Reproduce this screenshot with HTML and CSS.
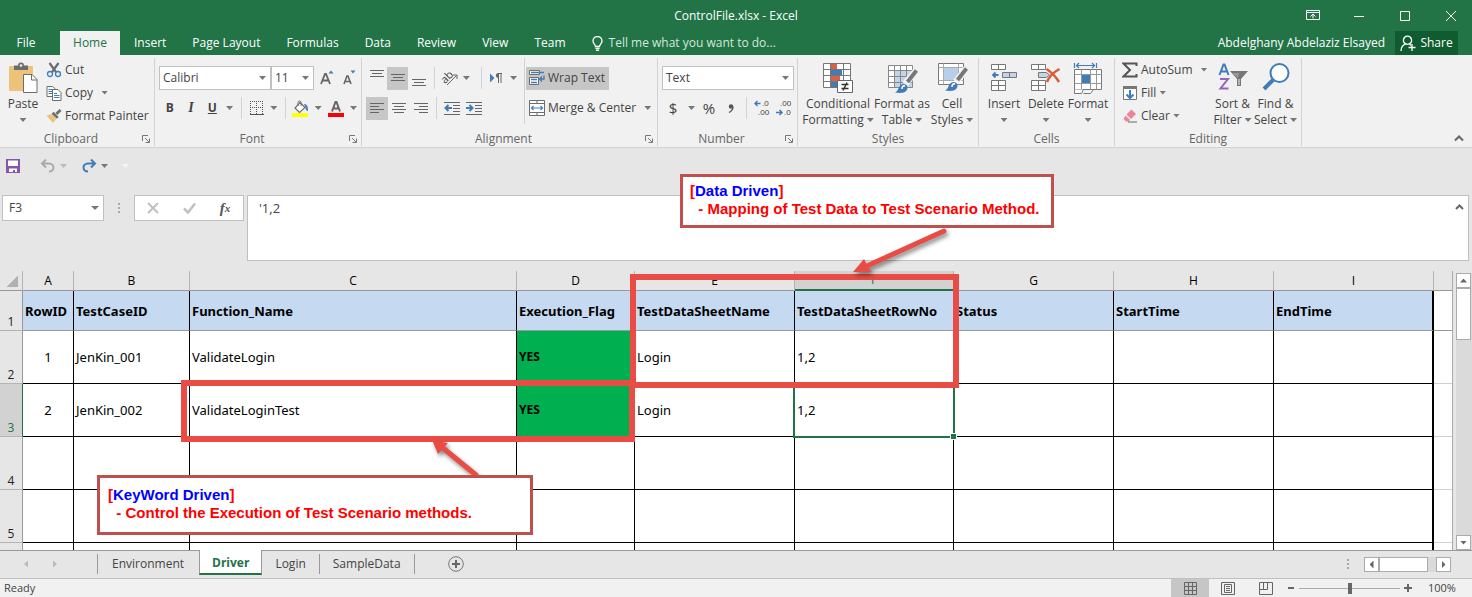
FILE: index.html
```
<!DOCTYPE html>
<html lang="en">
<head>
<meta charset="utf-8">
<title>ControlFile.xlsx - Excel</title>
<link rel="stylesheet" href="styles.css">
</head>
<body>
<div class="app">
  <header class="titlebar">
    <div class="caption">
      <h1 class="doc-title">ControlFile.xlsx - Excel</h1>
      <div class="window-controls">
        <button aria-label="Ribbon display options"><svg width="14" height="12" viewBox="0 0 14 12"><path d="M.5.5h13v9H.5zM.5 2.500h13M7 8.500V4M4.500 6.500 7 4l2.500 2.500" /></svg></button>
        <button aria-label="Minimize"><svg width="12" height="12" viewBox="0 0 12 12"><path d="M1 6.500h10"/></svg></button>
        <button aria-label="Maximize"><svg width="12" height="12" viewBox="0 0 12 12"><path d="M1.500 1.500h9v9h-9z"/></svg></button>
        <button aria-label="Close"><svg width="12" height="12" viewBox="0 0 12 12"><path d="M1 1l10 10M11 1 1 11"/></svg></button>
      </div>
    </div>
    <nav class="tabs">
      <button class="tab file">File</button>
      <button class="tab active">Home</button>
      <button class="tab">Insert</button>
      <button class="tab">Page Layout</button>
      <button class="tab">Formulas</button>
      <button class="tab">Data</button>
      <button class="tab">Review</button>
      <button class="tab">View</button>
      <button class="tab">Team</button>
      <button class="tab tell"><svg width="11" height="15" viewBox="0 0 11 15"><path d="M3.500 10.500C3.500 8.500 1 7.500 1 5a4.500 4.500 0 0 1 9 0c0 2.500-2.500 3.500-2.500 5.500zM3.500 12.500h4M4 14.500h3"/></svg>Tell me what you want to do...</button>
      <span class="account">Abdelghany Abdelaziz Elsayed</span>
      <button class="share"><svg width="16" height="17" viewBox="0 0 16 17"><path d="M7.500 1.200a4 4 0 0 1 1.800 7.600L11 10.500M7.500 1.200a4 4 0 0 0-1.800 7.600C2.500 10 1 12.500 1 16M5.700 8.800c1 .6 2.500.6 3.600 0M12 9v7M8.500 12.500h7"/></svg>Share</button>
    </nav>
  </header>

  <section class="ribbon">
    <div class="group clipboard">
      <div class="body">
        <button class="big paste"><svg width="30" height="32" viewBox="0 0 30 32"><rect x="1" y="4" width="24" height="25" rx="1" fill="#edc27a"/><path d="M6 8V3.500h4a3 3 0 0 1 6 0h4V8z" fill="#6d6d6d"/><circle cx="13" cy="3.500" r="1.300" fill="#f1f1f1"/><path d="M15.500 12.500h8.500l5 5v13H15.500z" fill="#fff" stroke="#6d6d6d"/><path d="M23.500 12.500V18H29" fill="none" stroke="#6d6d6d"/></svg>Paste<i class="caret"></i></button>
        <div class="stack">
          <button class="row"><svg width="16" height="16" viewBox="0 0 16 16"><path d="M3.500 1 10 10M12.500 1 6 10" stroke="#6d6d6d" stroke-width="2.200"/><circle cx="4" cy="12" r="2.500" fill="none" stroke="#3f7cb8" stroke-width="1.300"/><circle cx="12" cy="12" r="2.500" fill="none" stroke="#3f7cb8" stroke-width="1.300"/></svg>Cut</button>
          <button class="row"><svg width="16" height="16" viewBox="0 0 16 16"><path d="M1 1.500h5.500L9.500 4v7.500H1z" fill="#fff" stroke="#6d6d6d"/><path d="M2.500 4.500h4M2.500 6.500h4M2.500 8.500h4" stroke="#3f7cb8"/><path d="M6.500 4.500h5.500l3 3v8H6.500z" fill="#fff" stroke="#6d6d6d"/><path d="M8 8.500h3M8 10.500h5.500M8 12.500h5.500" stroke="#3f7cb8"/></svg>Copy<i class="caret far"></i></button>
          <button class="row"><svg width="16" height="16" viewBox="0 0 17 16"><path d="M.5 7.500 6 6l5 5-3.500 4.500z" fill="#edc27a"/><path d="M6 5.500 8 3.500l5.500 5.500-2 2z" fill="#6d6d6d"/><path d="m11 6 4.500-4.500" stroke="#6d6d6d" stroke-width="3"/></svg>Format Painter</button>
        </div>
      </div>
      <div class="label"><span>Clipboard</span><svg class="launch" width="8" height="8" viewBox="0 0 8 8"><path d="M.5 6V.5H6M3 3l4 4M7.500 3.500v4h-4"/></svg></div>
    </div>

    <div class="group font">
      <div class="body lines">
        <div class="line">
          <label class="combo name"><select aria-label="Font"><option>Calibri</option></select></label>
          <label class="combo size"><select aria-label="Font size"><option>11</option></select></label>
          <button class="ib grow" aria-label="Increase font size"><svg width="16" height="16" viewBox="0 0 16 16"><path d="M1 14 5 4h1l4 10M2.500 10.500h6" fill="none" stroke="#666" stroke-width="1.800"/><path d="m8.500 3.500 2.500-3 2.500 3z" fill="#3f7cb8"/></svg></button>
          <button class="ib" aria-label="Decrease font size"><svg width="16" height="16" viewBox="0 0 16 16"><path d="M2 14 5 6h1l3 8M3 11.500h5" fill="none" stroke="#666" stroke-width="1.600"/><path d="m8.500.5 2.500 3 2.500-3z" fill="#3f7cb8"/></svg></button>
        </div>
        <div class="line">
          <button class="ib b">B</button><button class="ib i">I</button><button class="ib u">U</button><i class="caret"></i>
          <i class="sep"></i>
          <button class="ib" aria-label="Borders"><svg width="14" height="14" viewBox="0 0 14 14"><path d="M0 .5h14M0 6.500h14M.5 0v13M6.500 0v13M12.500 0v13" stroke="#555" stroke-dasharray="1 1" fill="none"/><path d="M0 13.500h14" stroke="#555"/></svg></button><i class="caret"></i>
          <i class="sep"></i>
          <button class="ib" aria-label="Fill color"><svg width="17" height="17" viewBox="0 0 17 17"><path d="m8 2.500 5 5-5.500 5L3 8z" fill="#fff" stroke="#6d6d6d" stroke-width="1.200"/><path d="M6 6V2.500a1.500 1.500 0 0 1 3 0V6" fill="none" stroke="#6d6d6d"/><path d="M12 4c3 0 4 2 4 7-2 0-2.500-2-2.500-4z" fill="#3f7cb8"/><path d="M0 13h16v4H0z" fill="#ff0"/></svg></button><i class="caret"></i>
          <button class="ib" aria-label="Font color"><svg width="16" height="17" viewBox="0 0 16 17"><path d="M4 11.500 7.500 2h1l3.500 9.500M5 8.500h6" fill="none" stroke="#666" stroke-width="2"/><path d="M0 13h16v4H0z" fill="red"/></svg></button><i class="caret"></i>
        </div>
      </div>
      <div class="label"><span>Font</span><svg class="launch" width="8" height="8" viewBox="0 0 8 8"><path d="M.5 6V.5H6M3 3l4 4M7.500 3.500v4h-4"/></svg></div>
    </div>

    <div class="group align">
      <div class="body split">
        <div class="lines left">
          <div class="line">
            <button class="ib" aria-label="Top align"><svg width="14" height="16" viewBox="0 0 14 16"><path class="g" d="M0 .5h14M2 3.500h10M0 6.500h14"/></svg></button>
            <button class="ib on" aria-label="Middle align"><svg width="14" height="16" viewBox="0 0 14 16"><path class="g" d="M0 4.500h14M2 7.500h10M0 10.500h14"/></svg></button>
            <button class="ib" aria-label="Bottom align"><svg width="14" height="16" viewBox="0 0 14 16"><path class="g" d="M0 9.500h14M2 12.500h10M0 15.500h14"/></svg></button>
            <i class="sep"></i>
            <button class="ib" aria-label="Orientation"><svg class="orient" width="17" height="16" viewBox="0 0 17 16"><text x="0" y="11" transform="rotate(-45 6 8)" font-size="11">ab</text><path d="M6 15 15.500 5.500M12 5h4v4" fill="none" stroke="#666"/></svg></button><i class="caret"></i>
            <i class="sep"></i>
            <button class="ib" aria-label="Text direction"><svg width="14" height="12" viewBox="0 0 14 12"><path d="M1 1.500 5.500 6 1 10.500z" fill="#3f7cb8"/><path d="M9 1.500h4M9.500 1.500V11M12 1.500V11" stroke="#666" fill="none"/><path d="M9.500 1C6 1 6 6 9.500 6z" fill="#666"/></svg></button><i class="caret"></i>
          </div>
          <div class="line">
            <button class="ib on" aria-label="Align left"><svg width="14" height="12" viewBox="0 0 14 12"><path class="g" d="M0 1.500h14M0 4.500h9M0 7.500h14M0 10.500h9"/></svg></button>
            <button class="ib" aria-label="Center"><svg width="14" height="12" viewBox="0 0 14 12"><path class="g" d="M0 1.500h14M2 4.500h10M0 7.500h14M2 10.500h10"/></svg></button>
            <button class="ib" aria-label="Align right"><svg width="14" height="12" viewBox="0 0 14 12"><path class="g" d="M0 1.500h14M5 4.500h9M0 7.500h14M5 10.500h9"/></svg></button>
            <i class="sep"></i>
            <button class="ib" aria-label="Decrease indent"><svg width="16" height="14" viewBox="0 0 16 14"><path class="g" d="M0 1.500h16M9 4.500h7M9 7.500h7M9 10.500h7M0 13.500h16"/><path d="M8 7H2M4.500 4 1.500 7l3 3" fill="none" stroke="#3f7cb8" stroke-width="2"/></svg></button>
            <button class="ib" aria-label="Increase indent"><svg width="16" height="14" viewBox="0 0 16 14"><path class="g" d="M0 1.500h16M9 4.500h7M9 7.500h7M9 10.500h7M0 13.500h16"/><path d="M0 7h6M3.500 4l3 3-3 3" fill="none" stroke="#3f7cb8" stroke-width="2"/></svg></button>
          </div>
        </div>
        <div class="lines right">
          <div class="line"><button class="wide on"><svg width="16" height="16" viewBox="0 0 16 16"><path d="M.5.500h10v4H.5zM.5 7.500h9v7h-9z" fill="#fff" stroke="#6d6d6d"/><path d="M2 2.500h13M2 9.500h6M2 12.500h6M15 5.500v3.500h-4M13 6.500 10.500 9l2.500 2.500" stroke="#3f7cb8" stroke-width="1.300" fill="none"/></svg>Wrap Text</button></div>
          <div class="line"><button class="wide"><svg width="16" height="16" viewBox="0 0 16 16"><path d="M.5.500h15v15H.5zM.5 3.500h15M.5 12.500h15M8 .5v3M8 12.500v3" fill="#fff" stroke="#6d6d6d"/><path d="M2.500 8h11M4.500 6l-2 2 2 2M11.500 6l2 2-2 2" fill="none" stroke="#3f7cb8" stroke-width="1.200"/></svg>Merge &amp; Center<i class="caret far"></i></button></div>
        </div>
      </div>
      <div class="label"><span>Alignment</span><svg class="launch" width="8" height="8" viewBox="0 0 8 8"><path d="M.5 6V.5H6M3 3l4 4M7.500 3.500v4h-4"/></svg></div>
    </div>

    <div class="group number">
      <div class="body lines">
        <div class="line"><label class="combo format"><select aria-label="Number format"><option>Text</option></select></label></div>
        <div class="line">
          <button class="ib sym">$</button><i class="caret"></i>
          <button class="ib sym">%</button>
          <button class="ib sym" aria-label="Comma style"><svg width="6" height="9" viewBox="0 0 6 9"><circle cx="3" cy="2.500" r="2.200" fill="#555"/><path d="M5 2.500C5 5 4 7 1 8.500" fill="none" stroke="#555" stroke-width="1.300"/></svg></button>
          <i class="sep"></i>
          <button class="ib" aria-label="Increase decimal"><svg class="decimal" width="16" height="18" viewBox="0 0 16 18"><path d="M6.500 4.500H1.500M3.500 2 1 4.500 3.500 7" fill="none" stroke="#3f7cb8" stroke-width="1.500"/><text x="8" y="7">.0</text><text x="4" y="16">.00</text></svg></button>
          <button class="ib" aria-label="Decrease decimal"><svg class="decimal" width="16" height="18" viewBox="0 0 16 18"><path d="M0 13.500h5.500M3.500 11 6 13.500 3.500 16" fill="none" stroke="#3f7cb8" stroke-width="1.500"/><text x="4" y="7">.00</text><text x="8" y="16">.0</text></svg></button>
        </div>
      </div>
      <div class="label"><span>Number</span><svg class="launch" width="8" height="8" viewBox="0 0 8 8"><path d="M.5 6V.5H6M3 3l4 4M7.500 3.500v4h-4"/></svg></div>
    </div>

    <div class="group styles">
      <div class="body">
        <button class="big"><svg width="32" height="32" viewBox="0 0 32 32"><path d="M1.500 1.500h27v24h-27z" fill="#fff"/><path d="M9 2h6v5H9zM9 14h9v5H9z" fill="#dc6142"/><path d="M9 8h11v5H9zM9 20h6v5H9z" fill="#3f7cb8"/><path d="M1.500 1.500h27v24h-27zM8.500 1.500v24M21.500 1.500v24M1.500 7.500h27M1.500 13.500h27M1.500 19.500h27" fill="none" stroke="#777"/><path d="M15.500 18.500h15v12h-15z" fill="#fff" stroke="#666"/><path d="M19.500 22.500h7M19.500 26.500h7M25 20.500l-4 8" stroke="#333" stroke-width="1.500"/></svg><span>Conditional</span><span>Formatting<i class="caret"></i></span></button>
        <button class="big"><svg width="32" height="32" viewBox="0 0 32 32"><path d="M2.500 3.500h24v22h-24z" fill="#fff"/><path d="M9 9h18v17H9z" fill="#c2d4ea"/><path d="M2.500 3.500h24v22h-24zM8.500 3.500v22M14.500 3.500v22M20.500 3.500v22M2.500 8.500h24M2.500 14.500h24M2.500 20.500h24" fill="none" stroke="#888"/><path d="m30 9-11 13" stroke="#f1f1f1" stroke-width="7"/><path d="m30.500 8.500-9 11.500" stroke="#777" stroke-width="4"/><path d="M9 30.500c4-1 3-8 8-8.500 5 0 6 5 2.500 7.500-3 2-7 1.500-10.500 1z" fill="#3f7cb8"/><path d="M16 27c0-2.500 1-3.500 3-3" stroke="#fff" stroke-width="1.500" fill="none"/></svg><span>Format as</span><span>Table<i class="caret"></i></span></button>
        <button class="big"><svg width="32" height="32" viewBox="0 0 32 32"><path d="M2.500 1.500h25v21h-25z" fill="#fff" stroke="#777"/><path d="M7 6h16v13H7z" fill="#b8cfea"/><path d="M2.500 5.500h25M2.500 18.500h25M7.500 1.500v21M22.500 1.500v21" stroke="#aaa"/><path d="m30 7-10 13" stroke="#f1f1f1" stroke-width="7"/><path d="m30.500 6.500-9 11.500" stroke="#777" stroke-width="4"/><path d="M9 28.500c4-1 3-8 8-8.500 5 0 6 5 2.500 7.500-3 2-7 1.500-10.500 1z" fill="#3f7cb8"/><path d="M16 25c0-2.500 1-3.500 3-3" stroke="#fff" stroke-width="1.500" fill="none"/></svg><span>Cell</span><span>Styles<i class="caret"></i></span></button>
      </div>
      <div class="label"><span>Styles</span></div>
    </div>

    <div class="group cells">
      <div class="body">
        <button class="big"><svg width="28" height="32" viewBox="0 0 28 32"><path d="M1.500 2.500h14v5h-14zM8.500 2.500v5M1.500 18.500h14v10h-14zM1.500 23.500h14M8.500 18.500v10" fill="#fff" stroke="#777"/><path d="M12.500 10.500h14v5h-14zM19.500 10.500v5" fill="#c2d4ea" stroke="#777"/><path d="M8.500 13H3M5.500 10.500 3 13l2.500 2.500" fill="none" stroke="#3f7cb8" stroke-width="1.800"/></svg>Insert<i class="caret"></i></button>
        <button class="big"><svg width="32" height="32" viewBox="0 0 32 32"><path d="M1.500 2.500h14v5h-14zM8.500 2.500v5M1.500 18.500h14v10h-14zM1.500 23.500h14M8.500 18.500v10" fill="#fff" stroke="#777"/><path d="M8.500 10.500h8l3 2.500-3 2.500h-8z" fill="#c2d4ea" stroke="#777"/><path d="M16.500 7C21 10 26 15 29 20M29.500 7C24 10 19 15 17 20" stroke="#dc5a38" stroke-width="2.500" fill="none"/></svg>Delete<i class="caret"></i></button>
        <button class="big"><svg width="30" height="32" viewBox="0 0 30 32"><path d="M1.500 1v5M23.500 1v5M3 3.500h19M6 1 3.500 3.500 6 6M19 1l2.500 2.500L19 6" stroke="#3f7cb8" fill="none" stroke-width="1.200"/><path d="M1.500 7.500h27v20h-27z" fill="#fff" stroke="#777"/><path d="M8.500 7.500v20M17.500 7.500v20M23.500 7.500v20M1.500 12.500h27M1.500 21.500h27" stroke="#999"/><path d="M9 13h8v8H9z" fill="#3f7cb8"/><path d="M1.500 27.500v4h7l2-4M10.500 31.500h7l3-4" fill="#fff" stroke="#777"/></svg>Format<i class="caret"></i></button>
      </div>
      <div class="label"><span>Cells</span></div>
    </div>

    <div class="group editing">
      <div class="body">
        <div class="stack">
          <button class="row"><svg width="16" height="16" viewBox="0 0 16 16"><path d="M14.500 4V1.500h-13L8 8l-6.500 6.500h13V12" fill="none" stroke="#555" stroke-width="2"/></svg>AutoSum<i class="caret far"></i></button>
          <button class="row"><svg width="16" height="16" viewBox="0 0 16 16"><path d="M1.500 1.500h13v13h-13z" fill="#fff" stroke="#777"/><path d="M1 1h14v3H1z" fill="#777"/><path d="M8 5v8M4.500 9.500 8 13l3.500-3.500" fill="none" stroke="#3f7cb8" stroke-width="2"/></svg>Fill<i class="caret"></i></button>
          <button class="row"><svg width="16" height="16" viewBox="0 0 16 16"><path d="M9.500 1.500 14 6l-5 5-4.500-4.500z" fill="#e8869a"/><path d="m3.500 7.500 4.500 4.500-1.500 1.500H4L1.500 11z" fill="#e8869a"/><path d="M6 14h9" stroke="#666"/></svg>Clear<i class="caret"></i></button>
        </div>
        <button class="big"><svg width="32" height="32" viewBox="0 0 32 32"><path d="m2.500 13 4-10.500h1l4 10.500M4 9.500h6" fill="none" stroke="#3f7cb8" stroke-width="2"/><path d="M3 17h8L3.500 26.500H11.500" fill="none" stroke="#9a63bb" stroke-width="2"/><path d="M13 9h18l-7 8v7h-4v-7z" fill="#777"/><path d="M15.500 11h7l-2 5z" fill="#999"/><path d="M21.500 17h1v6h-1z" fill="#eee"/></svg><span>Sort &amp;</span><span>Filter<i class="caret"></i></span></button>
        <button class="big"><svg width="28" height="32" viewBox="0 0 28 32"><path d="m11 18-9 9" stroke="#3f7cb8" stroke-width="4"/><circle cx="17.500" cy="11" r="9" fill="#fff" stroke="#3f7cb8" stroke-width="2"/></svg><span>Find &amp;</span><span>Select<i class="caret"></i></span></button>
      </div>
      <div class="label"><span>Editing</span></div>
    </div>
    <button class="collapse" aria-label="Collapse the ribbon"><svg width="10" height="7" viewBox="0 0 10 7"><path d="M1 5.500 5 1.500l4 4" fill="none" stroke="#666" stroke-width="2"/></svg></button>
  </section>

  <div class="quick">
    <button aria-label="Save"><svg width="14" height="14" viewBox="0 0 14 14"><path d="M0 0h14v14H0z" fill="#8755ae"/><path d="M2 1.500h10V7H2zM3 9.500h8V13H9v-2H7v2H3z" fill="#fff"/></svg></button>
    <button class="undo" aria-label="Undo"><svg width="16" height="14" viewBox="0 0 16 14"><path d="M2 4.500h7c6 0 6 8 0 8M6 .5l-4 4 4 4" fill="none" stroke="#aaa" stroke-width="2"/></svg></button><i class="caret faint"></i>
    <button class="redo" aria-label="Redo"><svg width="16" height="14" viewBox="0 0 16 14"><path d="M14 4.500H7c-6 0-6 8 0 8M10 .5l4 4-4 4" fill="none" stroke="#3f7cb8" stroke-width="2"/></svg></button><i class="caret"></i>
    <i class="caret ghost"></i>
  </div>

  <div class="formula">
    <label class="combo cellref"><input type="text" value="F3" aria-label="Name box"></label>
    <svg class="dots" width="3" height="12" viewBox="0 0 3 12"><path d="M0 0h2v2H0zM0 4h2v2H0zM0 8h2v2H0z" fill="#aaa"/></svg>
    <div class="fx">
      <button aria-label="Cancel"><svg width="12" height="12" viewBox="0 0 12 12"><path d="m1 1 10 10M11 1 1 11" stroke="#c0c0c0" stroke-width="2"/></svg></button>
      <button aria-label="Enter"><svg width="13" height="12" viewBox="0 0 13 12"><path d="m1 6.500 4 4L12 1.500" fill="none" stroke="#c0c0c0" stroke-width="2.500"/></svg></button>
      <button class="fn">f<small>x</small></button>
    </div>
    <div class="entry"><textarea aria-label="Formula bar">'1,2</textarea><svg width="9" height="7" viewBox="0 0 9 7"><path d="m1 5 3.500-3.500L8 5" fill="none" stroke="#666" stroke-width="2"/></svg></div>
  </div>

  <main class="sheet">
    <div class="grid">
      <table>
        <colgroup><col class="c0"><col class="ca"><col class="cb"><col class="cc"><col class="cd"><col class="ce"><col class="cf"><col class="ce"><col class="ce"><col class="ce"><col></colgroup>
        <thead><tr><th class="corner"></th><th>A</th><th>B</th><th>C</th><th>D</th><th>E</th><th class="sel">F</th><th>G</th><th>H</th><th>I</th><th></th></tr></thead>
        <tbody>
          <tr class="head"><th>1</th><td>RowID</td><td>TestCaseID</td><td>Function_Name</td><td>Execution_Flag</td><td>TestDataSheetName</td><td>TestDataSheetRowNo</td><td>Status</td><td>StartTime</td><td>EndTime</td><td></td></tr>
          <tr><th>2</th><td class="num">1</td><td>JenKin_001</td><td>ValidateLogin</td><td class="yes">YES</td><td>Login</td><td>1,2</td><td></td><td></td><td></td><td></td></tr>
          <tr class="current"><th>3</th><td class="num">2</td><td>JenKin_002</td><td>ValidateLoginTest</td><td class="yes">YES</td><td>Login</td><td class="cursor">1,2</td><td></td><td></td><td></td><td></td></tr>
          <tr><th>4</th><td></td><td></td><td></td><td></td><td></td><td></td><td></td><td></td><td></td><td></td></tr>
          <tr><th>5</th><td></td><td></td><td></td><td></td><td></td><td></td><td></td><td></td><td></td><td></td></tr>
          <tr><th></th><td></td><td></td><td></td><td></td><td></td><td></td><td></td><td></td><td></td><td></td></tr>
        </tbody>
      </table>
    </div>
    <div class="vscroll"><button class="up" aria-label="Scroll up"></button><div class="thumb"></div><button class="down" aria-label="Scroll down"></button></div>
  </main>

  <nav class="sheets">
    <div class="arrows"><i class="prev"></i><i class="next"></i></div>
    <button class="st first">Environment</button>
    <button class="st active">Driver</button>
    <button class="st">Login</button>
    <button class="st">SampleData</button>
    <button class="add" aria-label="New sheet"><svg width="16" height="16" viewBox="0 0 16 16"><circle cx="8" cy="8" r="7.300" fill="none" stroke="#777"/><path d="M8 4v8M4 8h8" stroke="#666" stroke-width="2"/></svg></button>
    <svg class="dots" width="3" height="12" viewBox="0 0 3 12"><path d="M0 1h2v2H0zM0 5h2v2H0zM0 9h2v2H0z" fill="#aaa"/></svg>
    <div class="hscroll"><button class="left" aria-label="Scroll left"></button><div class="thumb"></div><button class="right" aria-label="Scroll right"></button></div>
  </nav>

  <footer class="status">
    <span class="ready">Ready</span>
    <button class="view on" aria-label="Normal"><svg width="13" height="13" viewBox="0 0 13 13"><path d="M.5.500h12v12H.5zM4.500.500v12M8.500.500v12M.5 4.500h12M.5 8.500h12"/></svg></button>
    <button class="view" aria-label="Page layout"><svg width="14" height="13" viewBox="0 0 14 13"><path d="M.5.500h13v12H.5zM3.500 2.500h7v8h-7zM5 4.500h4M5 6.500h4M5 8.500h4"/></svg></button>
    <button class="view" aria-label="Page break preview"><svg width="14" height="13" viewBox="0 0 14 13"><path d="M.5.500h13v12H.5zM4.500.500v7M8.500.500v7M.5 7.500h8"/></svg></button>
    <div class="zoom">
      <button aria-label="Zoom out"><svg width="8" height="8" viewBox="0 0 8 8"><path d="M1 4h6" stroke-width="2"/></svg></button>
      <input type="range" min="0" max="100" value="50" aria-label="Zoom">
      <button aria-label="Zoom in"><svg width="8" height="8" viewBox="0 0 8 8"><path d="M0 4h8M4 0v8" stroke-width="2"/></svg></button>
    </div>
    <span class="pct">100%</span>
  </footer>

  <div class="frame frame-data"></div>
  <div class="frame frame-keyword"></div>
  <svg class="arrow arrow-data" width="100" height="50" viewBox="0 0 100 50"><path d="M92 3 17 37" stroke="#e94b45" stroke-width="5" stroke-linecap="round"/><path d="m1 44 11-13 7 13z" fill="#e94b45"/></svg>
  <svg class="arrow arrow-keyword" width="52" height="44" viewBox="0 0 52 44"><path d="M45 37 12 10" stroke="#e94b45" stroke-width="5" stroke-linecap="round"/><path d="m1 2 16 3-10 11z" fill="#e94b45"/></svg>
  <div class="note note-data"><p>[<b>Data Driven</b>]</p><p>&nbsp; - Mapping of Test Data to Test Scenario Method.</p></div>
  <div class="note note-keyword"><p>[<b>KeyWord Driven</b>]</p><p>&nbsp; - Control the Execution of Test Scenario methods.</p></div>
</div>
</body>
</html>
```

FILE: styles.css
```
* { box-sizing: border-box; }
body { margin: 0; font: 12px/16px "Open Sans", "Noto Sans", sans-serif; color: #444; background: #e6e6e6; }
button, input, select, textarea { font: inherit; color: inherit; border: 0; padding: 0; margin: 0; background: none; border-radius: 0; }
button { display: flex; align-items: center; justify-content: center; white-space: nowrap; }
svg { flex: none; display: block; }
.app { position: relative; display: flex; flex-direction: column; height: 100vh; overflow: hidden; }
.caret { flex: none; width: 7px; height: 4px; background: #777; clip-path: polygon(0 0, 100% 0, 50% 100%); }

.titlebar { background: #227447; color: #fff; }
.caption { display: grid; grid-template-columns: 1fr auto 1fr; align-items: center; height: 31px; }
.doc-title { grid-column: 2; margin: 0; font-size: 12px; font-weight: 400; }
.window-controls { display: flex; justify-content: flex-end; }
.window-controls button { width: 46px; height: 26px; padding-left: 4px; }
.window-controls svg { fill: none; stroke: #fff; }
.tabs { display: flex; height: 24px; padding-right: 14px; }
.tab { padding: 0 13px; }
.tab.file, .tab.active { width: 60px; padding: 0; }
.tab.file { padding-right: 8px; }
.tab.active { background: #f1f1f1; color: #217346; margin-right: 1px; }
.tell { gap: 6px; color: #d5e6dc; }
.tell svg, .share svg { fill: none; stroke: #fff; stroke-width: 1.300; }
.account { margin-left: auto; padding-right: 10px; align-self: center; }
.share { width: 63px; background: #0e5c2f; gap: 4px; }

.ribbon { display: flex; height: 93px; padding: 3px 0 1px; background: #f1f1f1; border-bottom: 1px solid #d2d2d2; }
.group { display: flex; flex-direction: column; border-right: 1px solid #d2d2d2; flex: none; }
.clipboard { width: 155px; }
.font { width: 207px; }
.align { width: 296px; }
.number { width: 140px; }
.styles { width: 181px; }
.cells { width: 136px; }
.editing { width: 187px; }
.body { display: flex; height: 73px; }
.label { display: flex; align-items: center; height: 15px; color: #666; }
.label span { flex: 1; text-align: center; }
.launch { margin-right: 4px; fill: none; stroke: #777; }
.big { flex-direction: column; justify-content: flex-start; padding-top: 4px; }
.big svg { margin-bottom: 2px; height: 32px; }
.big .caret { margin-top: 6px; }
.big span .caret { display: inline-block; margin: 0 0 2px 3px; }
.paste { width: 46px; }
.stack { display: flex; flex-direction: column; }
.row { height: 23px; justify-content: flex-start; gap: 3px; }
.row .far { margin-left: 5px; }
.lines { flex-direction: column; }
.body.lines { padding-left: 4px; }
.line { display: flex; align-items: center; height: 30px; }
.line:first-child { margin-top: 5px; }
.sep { width: 1px; height: 22px; background: #d2d2d2; margin: 0 4px; }
.combo { display: grid; align-items: center; background: #fff; border: 1px solid #c0c0c0; height: 24px; }
.combo select, .combo input { grid-area: 1 / 1; appearance: none; min-width: 0; width: 100%; padding: 0 3px; }
.combo::after { content: ""; grid-area: 1 / 1; justify-self: end; margin-right: 4px; width: 7px; height: 4px; background: #777; clip-path: polygon(0 0, 100% 0, 50% 100%); pointer-events: none; }
.name { width: 112px; }
.size { width: 43px; }
.format { width: 132px; }
.ib { width: 22px; height: 23px; }
.ib text { fill: #444; }
.orient { overflow: visible; }
.decimal { font: 8px "Liberation Sans", Arial, sans-serif; }
.font .ib + .caret { margin: 0 4px 0 3px; }
.grow { margin-left: 3px; }
.b { font-weight: 700; }
.i { font-weight: 700; font-style: italic; font-family: "Liberation Serif", serif; font-size: 14px; }
.u { font-weight: 700; text-decoration: underline; }
.on { background: #c6c6c6; }
.g { stroke: #666; fill: none; }
.left { width: 162px; padding-left: 4px; }
.align .left .line:first-child .ib:first-child { margin-right: 0; }
.align .ib + .caret { margin: 0 7px 0 3px; }
.lines.right { border-left: 1px solid #d2d2d2; padding-left: 1px; height: 66px; }
.wide { height: 23px; padding: 0 4px 0 3px; gap: 3px; }
.wide .far { margin-left: 5px; }
.sym { font-size: 15px; }
.number .sym + .caret { margin: 0 3px 0 4px; }
.styles .body { padding-left: 5px; }
.cells .body { padding-left: 4px; }
.styles .big:nth-child(1) { width: 70px; }
.styles .big:nth-child(2) { width: 58px; }
.styles .big:nth-child(3) { width: 42px; }
.cells .big { width: 42px; }
.editing .stack { width: 96px; padding-left: 7px; }
.editing .big { width: 43px; }
.collapse { margin: auto 8px 4px auto; }

.quick { display: flex; align-items: center; height: 36px; padding-left: 6px; }
.undo { margin: 0 4px 0 20px; }
.redo { margin: 0 4px 0 14px; }
.faint { background: #bbb; }
.ghost { margin-left: 14px; background: #f5f5f5; }

.formula { display: flex; align-items: flex-start; height: 87px; padding: 11px 3px 0 2px; }
.cellref { width: 102px; height: 26px; }
.cellref input { padding-left: 6px; }
.cellref::after { width: 8px; height: 4px; }
.formula .dots { margin: 8px 13px 0 14px; }
.fx { display: flex; width: 110px; height: 26px; border: 1px solid #c0c0c0; background: #fff; }
.fx button { flex: 1; }
.fx .fn { font: italic 700 15px "Liberation Serif", serif; color: #555; }
.fx small { font-size: 11px; }
.entry { display: flex; flex: 1; margin-left: 3px; height: 66px; border: 1px solid #c0c0c0; background: #fff; }
.entry textarea { flex: 1; padding: 4px 11px; resize: none; font-size: 13px; }
.entry svg { margin: 8px 4px; }

.sheet { display: flex; flex: 1; min-height: 0; }
.grid { flex: 1; overflow: hidden; border-right: 1px solid #aaa; }
table { width: 100%; table-layout: fixed; border-collapse: separate; border-spacing: 0; color: #000; }
.c0 { width: 23px; }
.ca { width: 51px; }
.cb { width: 116px; }
.cc { width: 327px; }
.cd { width: 118px; }
.ce { width: 160px; }
.cf { width: 159px; }
th { padding: 0; font-weight: 400; background: #e6e6e6; border-right: 1px solid #b4b4b4; border-bottom: 1px solid #999; }
thead th { height: 20px; }
thead th:last-child { border-right: 0; }
.corner { background: linear-gradient(135deg, #e6e6e6 50%, #b1b1b1 50%) content-box #e6e6e6; padding: 5px 4px 3px 7px; }
.sel { background: #d2d2d2; color: #217346; border-bottom: 2px solid #217346; }
tbody th { vertical-align: bottom; border-right-color: #999; border-bottom-color: #b4b4b4; color: #222; }
tbody tr { height: 53px; }
td { padding: 0 2px; font: 13px/18px "Noto Sans", "Open Sans", sans-serif; background: #fff; border-right: 1px solid #000; border-bottom: 1px solid #000; white-space: nowrap; overflow: hidden; }
td:nth-child(10) { border-right-width: 2px; }
td:last-child { border-right: 0; border-bottom-color: #d0d0d0; }
tbody .head { height: 40px; }
.head td { background: #c5d9f1; font-weight: 700; border-bottom-color: #999; }
.head td:last-child { background: #fff; }
td.num { text-align: center; }
td.yes { background: #00b050; font-weight: 700; font-size: 12px; }
.current th { background: #d2d2d2; color: #217346; border-right-color: #217346; }
td.cursor { position: relative; overflow: visible; }
.cursor::before { content: ""; position: absolute; inset: -2px; border: 2px solid #217346; }
.cursor::after { content: ""; position: absolute; right: -3px; bottom: -3px; width: 5px; height: 5px; background: #217346; outline: 1px solid #fff; }

.vscroll { display: flex; flex-direction: column; width: 16px; margin: 2px 0 0 3px; background: #dadada; }
.vscroll button, .vscroll .thumb, .hscroll button, .hscroll .thumb { border: 1px solid #ababab; background: #fff; }
.vscroll button, .vscroll .thumb { width: 15px; }
.vscroll button { height: 15px; }
.vscroll .thumb { height: 52px; }
.down { margin-top: auto; }
.vscroll button::after, .hscroll button::after { content: ""; width: 7px; height: 4px; background: #666; clip-path: polygon(50% 0, 100% 100%, 0 100%); }
.vscroll .down::after { clip-path: polygon(0 0, 100% 0, 50% 100%); }

.sheets { display: flex; height: 29px; padding-right: 21px; border-top: 1px solid #999; border-bottom: 1px solid #c0c0c0; }
.arrows { display: flex; align-items: center; gap: 25px; width: 97px; height: 26px; padding-left: 24px; }
.arrows i { width: 4px; height: 7px; background: #bbb; }
.prev { clip-path: polygon(100% 0, 100% 100%, 0 50%); }
.next { clip-path: polygon(0 0, 100% 50%, 0 100%); }
.st { height: 20px; margin-top: 3px; padding: 0 13px; border-right: 1px solid #999; }
.st.first { padding: 0 15px 0 14px; border-left: 1px solid #999; border-right: 0; }
.st.active { height: 25px; margin: -1px 0 0; padding: 3px 12px 0; background: #fff; color: #217346; font-weight: 700; border: solid #999; border-width: 0 1px; border-bottom: 2px solid #217346; }
.add { margin: 5px 0 0 33px; height: 16px; }
.sheets > .dots { margin: 7px 14px 0 auto; }
.hscroll { display: flex; width: 87px; height: 15px; margin-top: 6px; background: #dadada; }
.hscroll button { width: 15px; }
.hscroll .thumb { width: 49px; }
.hscroll .left { padding: 0; }
.hscroll .right { margin-left: auto; }
.hscroll button::after { width: 4px; height: 8px; clip-path: polygon(100% 0, 100% 100%, 0 50%); }
.hscroll .right::after { clip-path: polygon(0 0, 100% 50%, 0 100%); }

.status { display: flex; align-items: center; height: 18px; background: #f1f1f1; font-size: 11px; }
.ready { margin: 0 auto 0 4px; }
.view { width: 38px; height: 18px; }
.status svg { fill: none; stroke: #666; }
.zoom { display: flex; align-items: center; gap: 4px; margin-left: 2px; }
.zoom input { appearance: none; width: 101px; height: 11px; background: linear-gradient(#aaa, #aaa) center / 100% 1px no-repeat; }
.zoom input::-webkit-slider-thumb { appearance: none; width: 4px; height: 11px; background: #666; }
.pct { width: 60px; padding-left: 16px; }

.frame { position: absolute; border: 6px solid #e94b45; }
.frame-data { left: 630px; top: 274px; width: 329px; height: 114px; }
.frame-keyword { left: 181px; top: 380px; width: 454px; height: 62px; }
.arrow { position: absolute; filter: drop-shadow(2px 3px 2px rgba(0, 0, 0, .45)); }
.arrow-data { left: 852px; top: 228px; }
.arrow-keyword { left: 431px; top: 438px; }
.note { position: absolute; padding: 5px 7px; background: #fff; border: 3px solid #c0504d; color: #f00; font: 700 15px/18px "Liberation Sans", Arial, sans-serif; white-space: nowrap; }
.note p { margin: 0; }
.note b { color: #00f; }
.note-data { left: 680px; top: 174px; width: 374px; height: 54px; }
.note-keyword { left: 97px; top: 475px; width: 436px; height: 60px; padding: 8px; }
```
